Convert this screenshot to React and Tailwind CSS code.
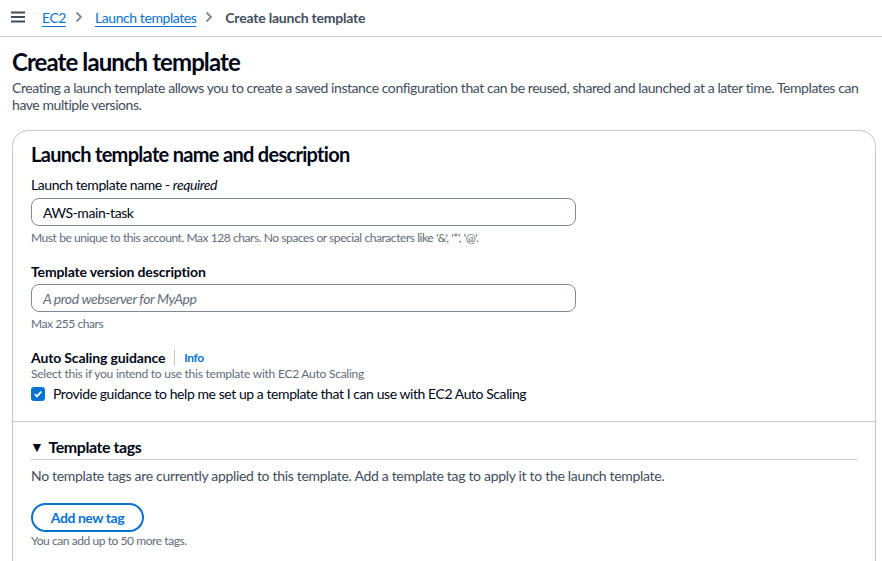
import React from "react";

const F = { fontFamily: 'Lato, "Liberation Sans", Arial, sans-serif' };

function Chevron() {
  return (
    <svg width="8" height="12" viewBox="0 0 8 12" className="ml-[9px] mr-[12px]">
      <path d="M1.5 1.5 L6 6 L1.5 10.5" stroke="#7d8998" strokeWidth="1.8" fill="none" />
    </svg>
  );
}

export default function App() {
  return (
    <div className="w-[882px] h-[561px] overflow-hidden bg-white text-[#000716] tracking-[-0.027em]" style={F}>
      {/* Top bar */}
      <div className="h-[37px] pb-[2px] border-b border-[#c6c6cd] flex items-center pl-[11px]">
        <svg width="14" height="12" viewBox="0 0 14 12" className="mr-[17px]">
          <rect x="0" y="0.5" width="14" height="2" fill="#414d5c" />
          <rect x="0" y="5" width="14" height="2" fill="#414d5c" />
          <rect x="0" y="9.5" width="14" height="2" fill="#414d5c" />
        </svg>
        <a className="text-[14px] text-[#0972d3] underline underline-offset-[3px] decoration-[1px]">EC2</a>
        <Chevron />
        <a className="text-[14px] text-[#0972d3] underline underline-offset-[3px] decoration-[1px]">Launch templates</a>
        <Chevron />
        <span className="text-[14px] font-bold text-[#414d5c] tracking-[-0.015em]">Create launch template</span>
      </div>

      <div className="pl-[12px] pr-[6px]">
        <h1 className="mt-[10px] text-[24px] leading-[30px] font-bold tracking-[-0.038em]">Create launch template</h1>
        <p className="mt-[2px] pr-[6px] text-[14px] leading-[17px] text-[#414d5c]">
          Creating a launch template allows you to create a saved instance configuration that can be reused, shared and launched at a later time. Templates can have multiple versions.
        </p>

        <div className="mt-[17px] border border-[#c6c6cd] rounded-[16px] h-[600px]">
          <div className="px-[18px] pt-[11px] pb-[19px] border-b border-[#c6c6cd]">
            <h2 className="text-[20px] leading-[24px] font-bold tracking-[-0.035em]">Launch template name and description</h2>

            <div className="mt-[10px] text-[14px] leading-[17px]">
              Launch template name - <i>required</i>
            </div>
            <div className="mt-[5px] w-[545px] h-[28px] border border-[#7d8998] rounded-[8px] flex items-center px-[11px] text-[14px]">
              AWS-main-task
            </div>
            <div className="mt-[4px] text-[12px] leading-[15px] text-[#5f6b7a]">
              Must be unique to this account. Max 128 chars. No spaces or special characters like '&amp;', '*', '@'.
            </div>

            <div className="mt-[18px] text-[14px] leading-[17px] font-bold tracking-[-0.01em]">Template version description</div>
            <div className="mt-[4px] w-[545px] h-[28px] border border-[#7d8998] rounded-[8px] flex items-center px-[11px] text-[14px] italic text-[#5f6b7a]">
              A prod webserver for MyApp
            </div>
            <div className="mt-[4px] text-[12px] leading-[15px] text-[#5f6b7a]">Max 255 chars</div>

            <div className="mt-[18px] flex items-center text-[14px] leading-[17px]">
              <span className="font-bold tracking-[-0.01em]">Auto Scaling guidance</span>
              <span className="mx-[9px] w-px h-[16px] bg-[#c6c6cd]" />
              <span className="text-[12px] font-bold text-[#0972d3]">Info</span>
            </div>
            <div className="text-[12px] leading-[15px] text-[#5f6b7a] tracking-[-0.02em]">
              Select this if you intend to use this template with EC2 Auto Scaling
            </div>
            <div className="mt-[4px] flex items-center text-[14px] leading-[17px]">
              <span className="w-[14px] h-[14px] rounded-[3px] bg-[#0972d3] flex items-center justify-center mr-[8px]">
                <svg width="10" height="10" viewBox="0 0 10 10">
                  <path d="M1.8 5.2 L4 7.4 L8.3 2.6" stroke="white" strokeWidth="1.8" fill="none" />
                </svg>
              </span>
              Provide guidance to help me set up a template that I can use with EC2 Auto Scaling
            </div>
          </div>

          <div className="px-[18px] pt-[15px]">
            <div className="flex items-center pb-[2px] border-b border-[#c6c6cd] text-[16px] leading-[20px] font-bold">
              <span className="text-[14px] mr-[5px] -ml-[1px]">▼</span>
              Template tags
            </div>
            <div className="mt-[7px] text-[14px] leading-[17px] text-[#414d5c] tracking-[-0.022em]">
              No template tags are currently applied to this template. Add a template tag to apply it to the launch template.
            </div>
            <button className="mt-[19px] h-[29px] w-[113px] rounded-full border-2 border-[#0972d3] text-[#0972d3] text-[14px] font-bold flex items-center justify-center">
              Add new tag
            </button>
            <div className="mt-[1px] text-[12px] leading-[15px] text-[#5f6b7a]">You can add up to 50 more tags.</div>
          </div>
        </div>
      </div>
    </div>
  );
}
